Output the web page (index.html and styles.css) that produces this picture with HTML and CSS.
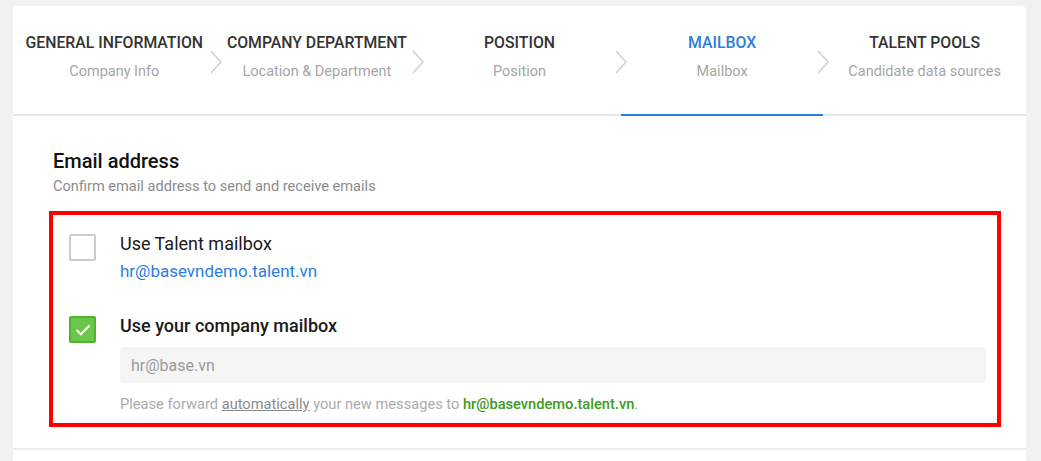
FILE: index.html
```html
<!DOCTYPE html>
<html lang="en">
<head>
    <meta charset="UTF-8">
    <meta name="viewport" content="width=device-width, initial-scale=1.0">
    <title>Mailbox</title>
    <link rel="stylesheet" href="styles.css">
</head>
<body>
    <div class="card">
        <div class="steps">
            <div class="step">
                <div class="step-title">General information</div>
                <div class="step-sub">Company Info</div>
                <svg class="chev" width="12" height="24" viewBox="0 0 12 24"><path d="M1 1 L11 12 L1 23" fill="none" stroke="#cfcfcf" stroke-width="1.5"/></svg>
            </div>
            <div class="step">
                <div class="step-title">Company department</div>
                <div class="step-sub">Location &amp; Department</div>
                <svg class="chev" width="12" height="24" viewBox="0 0 12 24"><path d="M1 1 L11 12 L1 23" fill="none" stroke="#cfcfcf" stroke-width="1.5"/></svg>
            </div>
            <div class="step">
                <div class="step-title">Position</div>
                <div class="step-sub">Position</div>
                <svg class="chev" width="12" height="24" viewBox="0 0 12 24"><path d="M1 1 L11 12 L1 23" fill="none" stroke="#cfcfcf" stroke-width="1.5"/></svg>
            </div>
            <div class="step active">
                <div class="step-title">Mailbox</div>
                <div class="step-sub">Mailbox</div>
                <svg class="chev" width="12" height="24" viewBox="0 0 12 24"><path d="M1 1 L11 12 L1 23" fill="none" stroke="#cfcfcf" stroke-width="1.5"/></svg>
            </div>
            <div class="step">
                <div class="step-title">Talent pools</div>
                <div class="step-sub">Candidate data sources</div>
            </div>
        </div>

        <div class="section">
            <h2 class="sec-title">Email address</h2>
            <p class="sec-sub">Confirm email address to send and receive emails</p>

            <div class="options">
                <div class="option">
                    <span class="check"></span>
                    <div class="opt-body">
                        <div class="opt-label">Use Talent mailbox</div>
                        <a class="opt-link">hr@basevndemo.talent.vn</a>
                    </div>
                </div>
                <div class="option second">
                    <span class="check on">
                        <svg width="16" height="12" viewBox="0 0 16 12"><path d="M1.5 6 L6 10.2 L14.5 1.5" fill="none" stroke="#fff" stroke-width="2.2"/></svg>
                    </span>
                    <div class="opt-body">
                        <div class="opt-label bold">Use your company mailbox</div>
                        <input type="text" class="txtbox" placeholder="hr@base.vn">
                        <p class="hint">Please forward <u>automatically</u> your new messages to <b>hr@basevndemo.talent.vn</b>.</p>
                    </div>
                </div>
            </div>
        </div>
        <div class="footer"></div>
    </div>
</body>
</html>
```

FILE: styles.css
```css
body {
    margin: 0;
    padding: 6px 0 0 13px;
    background-color: #f1f1f1;
    font-family: Roboto, "Liberation Sans", sans-serif;
}
.card {
    width: 1013px;
    background-color: #fff;
    border-radius: 4px 4px 0 0;
}
.steps {
    display: grid;
    grid-template-columns: repeat(5, 1fr);
    height: 108px;
    border-bottom: 2px solid #e6e6e6;
}
.step {
    position: relative;
    text-align: center;
    padding-top: 28px;
    box-sizing: border-box;
}
.chev {
    position: absolute;
    right: -6px;
    top: 44px;
}
.step.active {
    border-bottom: 2px solid #2a7ee0;
    margin-bottom: -2px;
}
.step-title {
    font-size: 15.8px;
    line-height: 18px;
    font-weight: 500;
    color: #333;
    text-transform: uppercase;
}
.active .step-title {
    color: #2a7ee0;
}
.step-sub {
    margin-top: 11px;
    font-size: 14.5px;
    line-height: 18px;
    color: #a6a6a6;
}
.section {
    padding: 33px 25px 21px 40px;
    border-bottom: 2px solid #ececec;
}
.sec-title {
    margin: 0;
    font-size: 20px;
    line-height: 24px;
    font-weight: 500;
    color: #111;
}
.sec-sub {
    margin: 4px 0 0;
    font-size: 14.6px;
    line-height: 18px;
    color: #8c8c8c;
}
.options {
    margin: 16px 0 0 -4px;
    border: 4px solid #ff0000;
    padding: 18px 11px 9px 16px;
}
.option {
    display: flex;
    gap: 24px;
}
.option.second {
    margin-top: 33px;
}
.check {
    flex: none;
    width: 27px;
    height: 27px;
    box-sizing: border-box;
    border: 2px solid #cccccc;
    border-radius: 2px;
    margin-top: 1px;
    display: flex;
    align-items: center;
    justify-content: center;
}
.check.on {
    background-color: #6cc64a;
    border-color: #4fb42c;
}
.opt-body {
    flex: 1;
}
.opt-label {
    font-size: 18px;
    line-height: 22px;
    color: #1a1a1a;
}
.opt-label.bold {
    font-weight: 500;
}
.opt-link {
    display: block;
    margin-top: 5px;
    font-size: 17px;
    line-height: 22px;
    color: #2a7ee0;
}
.txtbox {
    display: block;
    width: 100%;
    box-sizing: border-box;
    height: 36px;
    margin-top: 10px;
    border: none;
    border-radius: 4px;
    background-color: #f5f5f5;
    padding: 0 11px;
    font-family: inherit;
    font-size: 16px;
    outline: none;
}
.txtbox::placeholder {
    color: #9a9a9a;
}
.hint {
    margin: 11px 0 0;
    font-size: 14.65px;
    line-height: 20px;
    color: #ababab;
}
.hint u {
    color: #8a8a8a;
}
.hint b {
    font-weight: 500;
    color: #3d9b1e;
}
.footer {
    height: 20px;
}
```
